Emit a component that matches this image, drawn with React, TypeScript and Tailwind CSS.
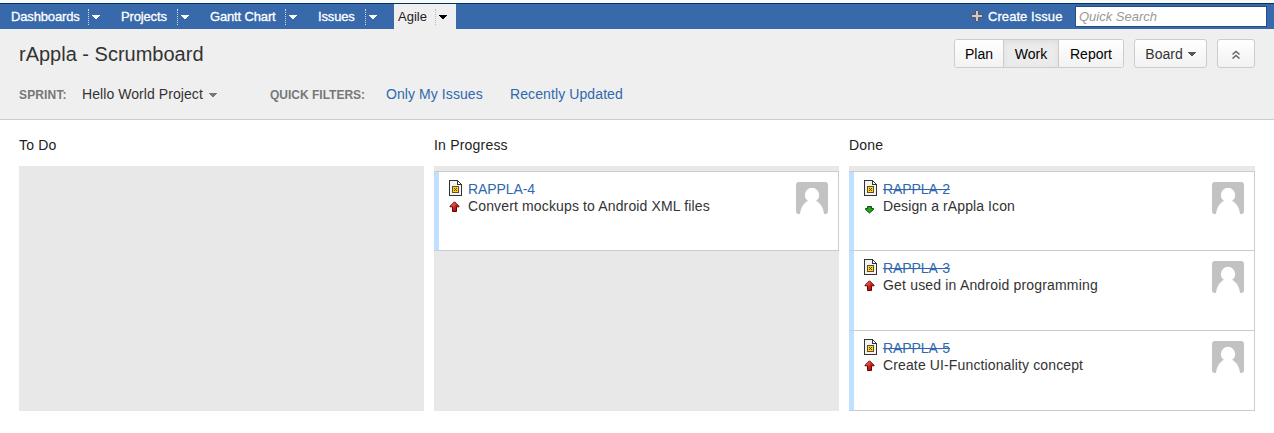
import React from "react";

function Caret({ className = "" }: { className?: string }) {
  return (
    <svg className={`shrink-0 ${className}`} width="8" height="4" viewBox="0 0 8 4" fill="currentColor" shapeRendering="crispEdges">
      <path d="M0 0h8v1H7v1H6v1H5v1H3V3H2V2H1V1H0z" />
    </svg>
  );
}

function NavItem({ label, width, active = false }: { label: string; width: string; active?: boolean }) {
  return (
    <div className={`flex h-[25px] shrink-0 items-center ${width} ${active ? "bg-[#efefef] text-[#222]" : "text-white"}`}>
      <span className={`grow whitespace-nowrap pl-1 text-[13px] leading-[25px] ${active ? "" : "tracking-[-0.15px] [-webkit-text-stroke:0.3px_white]"}`}>
        {label}
      </span>
      <span className={`flex h-4 w-[21px] items-center border-l border-dotted pl-[3px] ${active ? "border-[#bbb]" : "border-[#c9dcf2]"}`}>
        <Caret className={active ? "text-black" : "text-white"} />
      </span>
    </div>
  );
}

function IssueIcon() {
  return (
    <svg width="13" height="16" viewBox="0 0 13 16" shapeRendering="crispEdges">
      <path d="M0 0h9v1h1v1h1v1h1v1h1v12H0z" fill="#333" />
      <path d="M1 1h7v4h4v10H1z" fill="#f3f3f3" />
      <path d="M9 2h1v1h1v1H9z" fill="#fff" />
      <rect x="3.500" y="6.500" width="6" height="6" fill="#ffd51e" stroke="#5d5030" />
      <path d="M5 8h1v1h1V8h1v1H7v1h1v1H7v-1H6v1H5v-1h1V9H5z" fill="#514000" />
    </svg>
  );
}

function Priority({ low = false }: { low?: boolean }) {
  return low ? (
    <svg width="11" height="11" viewBox="0 0 11 11">
      <path d="M3.500 2.500h4v2h2v1l-4 3.500-4-3.500v-1h2z" fill="#18a818" stroke="#174d0d" />
    </svg>
  ) : (
    <svg width="11" height="11" viewBox="0 0 11 11">
      <defs>
        <linearGradient id="priorityRed" x1="0" y1="0" x2="1" y2="1">
          <stop offset="0" stopColor="#ff9a8d" />
          <stop offset=".55" stopColor="#d51b16" />
          <stop offset="1" stopColor="#910000" />
        </linearGradient>
      </defs>
      <path d="M5.500.8l4.500 4.500v.5H7.500v4.700h-4V5.800H1v-.5z" fill="url(#priorityRed)" stroke="#5c0808" />
    </svg>
  );
}

function Avatar() {
  return (
    <svg width="32" height="32" viewBox="0 0 32 32">
      <rect width="32" height="32" rx="3" fill="#c2c2c2" />
      <circle cx="16" cy="13" r="7.200" fill="#fff" />
      <path d="M4 32c.6-6 3.500-11 8-13.200h8c4.500 2.200 7.400 7.200 8 13.200z" fill="#fff" />
    </svg>
  );
}

type Issue = { id: string; title: string; done?: boolean; low?: boolean; height: string; tracking: string };

function Card({ issue }: { issue: Issue }) {
  return (
    <div className={`flex border-r border-b border-[#ccc] bg-white ${issue.height}`}>
      <div className="w-[5px] bg-[#bfe0ff]" />
      <div className="ml-[10px] flex w-[19px] flex-col pt-2">
        <IssueIcon />
        <div className={issue.low ? "mt-[8px]" : "mt-[5px]"}>
          <Priority low={issue.low} />
        </div>
      </div>
      <div className="grow pt-[9px] text-[14px] leading-[17px]">
        <div className={`w-fit tracking-[-0.1px] text-[#3068ad] ${issue.done ? "line-through" : ""}`}>{issue.id}</div>
        <div className={`whitespace-nowrap text-[#333] ${issue.tracking}`}>{issue.title}</div>
      </div>
      <div className="mr-[10px] pt-[10px]">
        <Avatar />
      </div>
    </div>
  );
}

function Column({ title, width, issues }: { title: string; width: string; issues: Issue[] }) {
  return (
    <section className={width}>
      <h2 className="h-[46px] pt-[17px] text-[14px] leading-4 tracking-[0.2px] text-[#222]">{title}</h2>
      <div className="h-[245px] bg-[#e8e8e8] pt-[5px]">
        {issues.length > 0 && (
          <div className="border-t border-[#ccc]">
            {issues.map((issue) => (
              <Card key={issue.id} issue={issue} />
            ))}
          </div>
        )}
      </div>
    </section>
  );
}

const progress: Issue[] = [
  { id: "RAPPLA-4", title: "Convert mockups to Android XML files", height: "h-[79px]", tracking: "tracking-[0.14px]" },
];
const done: Issue[] = [
  { id: "RAPPLA-2", title: "Design a rAppla Icon", done: true, low: true, height: "h-[79px]", tracking: "tracking-[0.1px]" },
  { id: "RAPPLA-3", title: "Get used in Android programming", done: true, height: "h-[80px]", tracking: "tracking-[0.18px]" },
  { id: "RAPPLA-5", title: "Create UI-Functionality concept", done: true, height: "h-[80px]", tracking: "tracking-[0.13px]" },
];

export default function App() {
  return (
    <div className="h-[433px] w-[1274px] overflow-hidden bg-white font-['Liberation_Sans',Arial,sans-serif]">
      <div className="h-[3px] bg-[#fafafa]" />
      <nav className="flex h-[26px] border-t border-[#003366] bg-[#3769ab] pl-[7px]">
        <NavItem label="Dashboards" width="w-[102px]" />
        <div className="w-2" />
        <NavItem label="Projects" width="w-[81px]" />
        <div className="w-2" />
        <NavItem label="Gantt Chart" width="w-[100px]" />
        <div className="w-2" />
        <NavItem label="Issues" width="w-[72px]" />
        <div className="w-2" />
        <NavItem label="Agile" width="w-[62px]" active />
        <div className="grow" />
        <div className="flex items-center text-[13px] leading-[25px] tracking-[0.06px] text-white">
          <svg width="12" height="12" viewBox="0 0 12 12" className="mr-[5px] mb-[2px]">
            <path d="M4.500.5h3v4h4v3h-4v4h-3v-4h-4v-3h4z" fill="#ccc" stroke="#555" />
          </svg>
          <span className="w-[76px] whitespace-nowrap [-webkit-text-stroke:0.3px_white]">Create Issue</span>
        </div>
        <input
          className="mt-[2px] mr-[7px] ml-[11px] h-[21px] w-[192px] border border-[#254d80] bg-white px-[3px] text-[13px] italic outline-none placeholder:text-[#999]"
          placeholder="Quick Search"
        />
      </nav>
      <header className="h-[91px] border-b border-[#ccc] bg-[#efefef] pr-[19px] pl-[19px]">
        <div className="flex h-[49px] pt-[10px]">
          <h1 className="grow pt-[3px] text-[20px] leading-6 text-[#333]">rAppla - Scrumboard</h1>
          <div className="flex h-[29px] overflow-hidden rounded-[3px] border border-[#ccc] text-[14px] text-black">
            <button className="w-[49px] border-r border-[#ccc] bg-linear-to-b from-white to-[#f2f2f2] pt-[2px]">Plan</button>
            <button className="w-[55px] border-r border-[#ccc] bg-[#ebebeb] pt-[2px] shadow-[inset_0_2px_5px_#ddd]">Work</button>
            <button className="w-[64px] bg-linear-to-b from-white to-[#f2f2f2] pt-[2px]">Report</button>
          </div>
          <button className="ml-[10px] flex h-[29px] w-[73px] items-center justify-center gap-[5px] rounded-[3px] border border-[#ccc] bg-linear-to-b from-white to-[#f2f2f2] pt-[2px] text-[14px] text-[#333]">
            Board
            <Caret className="mb-[2px] text-[#555]" />
          </button>
          <button aria-label="Collapse header" className="ml-[10px] flex h-[29px] w-[38px] items-center justify-center rounded-[3px] border border-[#ccc] bg-linear-to-b from-white to-[#f2f2f2] pt-px">
            <svg width="8" height="9" viewBox="0 0 8 9" fill="none" stroke="#666" strokeWidth="1.500">
              <path d="M.5 4.500L4 1.500l3.500 3M.5 8.500L4 5.500l3.500 3" />
            </svg>
          </button>
        </div>
        <div className="flex pt-2 text-[14px] leading-4">
          <div className="w-[63px] pt-px text-[12px] leading-[16px] font-bold tracking-[0.15px] text-[#777]">SPRINT:</div>
          <div className="flex h-4 w-[188px] items-center gap-[6px] text-[#333]">
            <span className="whitespace-nowrap leading-4 tracking-[0.07px]">Hello World Project</span>
            <Caret className="mt-px text-[#777]" />
          </div>
          <div className="w-[116px] pt-px text-[12px] leading-[16px] font-bold text-[#777]">QUICK FILTERS:</div>
          <a className="w-[124px] tracking-[0.08px] text-[#3068ad]">Only My Issues</a>
          <a className="tracking-[0.1px] text-[#3068ad]">Recently Updated</a>
        </div>
      </header>
      <main className="flex gap-[10px] px-[19px]">
        <Column title="To Do" width="w-[405px]" issues={[]} />
        <Column title="In Progress" width="w-[405px]" issues={progress} />
        <Column title="Done" width="w-[406px]" issues={done} />
      </main>
    </div>
  );
}
